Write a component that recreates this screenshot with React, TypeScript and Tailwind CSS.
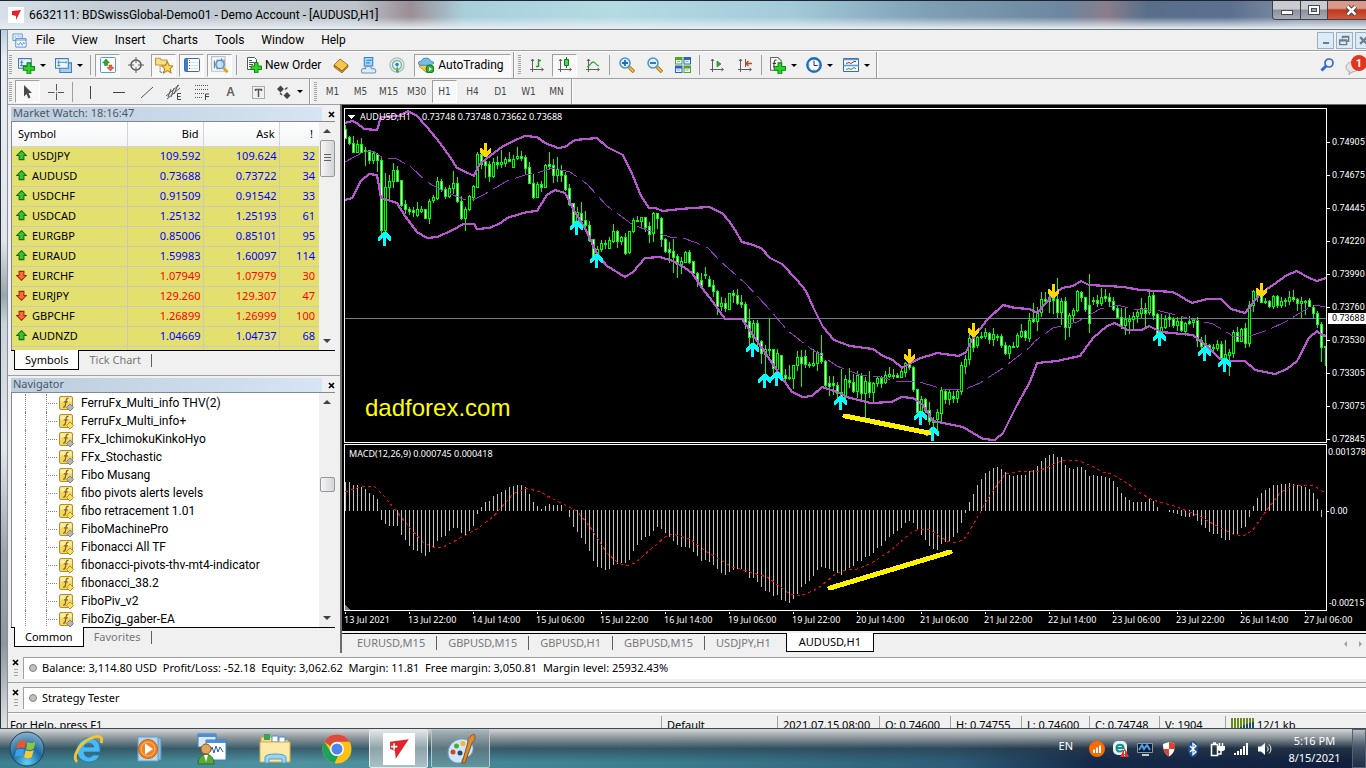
import React from 'react';
import clsx from 'clsx';

/* ---------- data ---------- */

const quotes = [
  { symbol: 'USDJPY', bid: '109.592', ask: '109.624', spread: 32, up: true },
  { symbol: 'AUDUSD', bid: '0.73688', ask: '0.73722', spread: 34, up: true },
  { symbol: 'USDCHF', bid: '0.91509', ask: '0.91542', spread: 33, up: true },
  { symbol: 'USDCAD', bid: '1.25132', ask: '1.25193', spread: 61, up: true },
  { symbol: 'EURGBP', bid: '0.85006', ask: '0.85101', spread: 95, up: true },
  { symbol: 'EURAUD', bid: '1.59983', ask: '1.60097', spread: 114, up: true },
  { symbol: 'EURCHF', bid: '1.07949', ask: '1.07979', spread: 30, up: false },
  { symbol: 'EURJPY', bid: '129.260', ask: '129.307', spread: 47, up: false },
  { symbol: 'GBPCHF', bid: '1.26899', ask: '1.26999', spread: 100, up: false },
  { symbol: 'AUDNZD', bid: '1.04669', ask: '1.04737', spread: 68, up: true },
];

const indicators = [
  { name: 'FerruFx_Multi_info THV(2)', gray: true },
  { name: 'FerruFx_Multi_info+', gray: false },
  { name: 'FFx_IchimokuKinkoHyo', gray: true },
  { name: 'FFx_Stochastic', gray: true },
  { name: 'Fibo Musang', gray: true },
  { name: 'fibo pivots alerts levels', gray: false },
  { name: 'fibo retracement 1.01', gray: false },
  { name: 'FiboMachinePro', gray: true },
  { name: 'Fibonacci All TF', gray: false },
  { name: 'fibonacci-pivots-thv-mt4-indicator', gray: false },
  { name: 'fibonacci_38.2', gray: false },
  { name: 'FiboPiv_v2', gray: false },
  { name: 'FiboZig_gaber-EA', gray: true },
];

const menus = ['File', 'View', 'Insert', 'Charts', 'Tools', 'Window', 'Help'];
const timeframes = ['M1', 'M5', 'M15', 'M30', 'H1', 'H4', 'D1', 'W1', 'MN'];
const chartTabs = ['EURUSD,M15', 'GBPUSD,M15', 'GBPUSD,H1', 'GBPUSD,M15', 'USDJPY,H1', 'AUDUSD,H1'];
const prices = ['0.74905', '0.74675', '0.74445', '0.74220', '0.73990', '0.73760', '0.73530', '0.73305', '0.73075', '0.72845'];
const dates = [
  '13 Jul 2021', '13 Jul 22:00', '14 Jul 14:00', '15 Jul 06:00', '15 Jul 22:00', '16 Jul 14:00', '19 Jul 06:00', '19 Jul 22:00',
  '20 Jul 14:00', '21 Jul 06:00', '21 Jul 22:00', '22 Jul 14:00', '23 Jul 06:00', '23 Jul 22:00', '26 Jul 14:00', '27 Jul 06:00',
];

// high, low, body top, body bottom, 1 = bull / 0 = bear
const candles: number[][] = [
  [20,33,24,33,0],[31,39,32,38,0],[31,47,38,47,0],[35,47,39,47,1],[33,47,39,47,0],[42,60,45,46,0],[45,58,45,55,0],[46,58,48,55,1],
  [48,66,49,55,0],[53,128,55,125,0],[68,130,82,125,1],[70,96,76,82,1],[58,82,65,76,1],[61,76,65,76,0],[75,101,75,100,0],[95,108,99,104,0],
  [102,109,104,106,0],[102,111,105,107,0],[97,111,104,110,1],[101,107,104,106,1],[104,113,104,113,0],[94,118,96,113,1],[90,97,92,95,1],[72,94,76,93,1],
  [74,86,76,84,0],[82,93,84,91,0],[80,92,83,91,1],[66,88,78,83,1],[72,97,78,96,0],[91,114,96,113,0],[102,125,104,113,1],[90,105,91,104,1],
  [80,95,81,92,1],[47,82,49,82,1],[47,63,49,59,0],[54,72,56,60,0],[56,76,59,71,0],[53,72,57,71,1],[51,63,57,59,0],[45,62,57,59,1],
  [52,61,54,58,1],[47,56,54,56,0],[50,62,54,62,1],[42,54,51,53,1],[46,55,51,53,0],[50,69,52,63,0],[57,78,62,78,0],[69,93,78,92,0],
  [77,92,79,92,1],[76,86,79,82,0],[59,82,60,82,1],[47,63,59,61,0],[54,77,60,70,0],[52,76,64,70,1],[60,76,65,70,0],[67,85,70,84,0],
  [79,100,83,99,0],[98,119,98,118,0],[102,120,107,118,1],[97,116,108,115,0],[106,121,115,120,0],[116,136,120,135,0],[134,151,134,151,0],[141,151,144,151,1],
  [135,146,138,144,1],[135,143,138,139,0],[132,143,135,143,1],[119,137,126,136,1],[125,142,126,136,0],[131,139,132,136,1],[128,149,132,148,0],[126,148,126,147,1],
  [113,127,115,126,1],[111,116,115,116,0],[112,122,112,116,1],[112,126,112,122,0],[117,137,121,129,0],[107,136,108,128,1],[108,123,108,113,0],[112,141,113,134,0],
  [133,147,134,146,0],[137,157,144,147,0],[134,167,146,152,0],[149,172,151,159,0],[152,168,156,159,1],[146,157,147,157,1],[145,158,147,157,0],[156,169,156,168,0],
  [167,181,168,175,0],[168,181,175,181,0],[162,173,169,170,1],[171,181,174,181,0],[175,191,180,186,0],[185,209,186,201,0],[192,205,198,201,1],[193,206,198,203,0],
  [188,204,188,204,1],[185,197,188,190,0],[184,199,190,198,0],[190,202,197,199,0],[197,223,199,217,0],[204,240,216,232,0],[215,247,218,232,1],[215,240,218,236,0],
  [235,258,236,248,0],[240,270,244,249,1],[213,250,244,245,0],[244,268,244,263,0],[244,267,248,264,1],[250,272,250,270,0],[264,275,270,273,0],[260,274,272,273,1],
  [260,283,260,273,1],[246,265,252,260,1],[245,281,252,258,0],[245,262,251,259,0],[257,262,259,260,0],[244,261,258,260,1],[246,265,247,258,1],[230,258,248,256,0],
  [255,283,256,280,0],[271,290,278,281,0],[271,289,278,280,0],[277,292,280,288,0],[264,295,287,292,0],[270,293,274,292,1],[263,282,275,277,0],[269,287,277,286,0],
  [266,292,270,286,1],[268,295,270,288,0],[272,312,276,288,1],[266,292,277,287,0],[277,297,278,287,1],[271,281,273,278,1],[271,282,273,278,0],[266,278,270,277,1],
  [262,272,269,271,1],[264,273,270,271,0],[268,272,270,272,0],[263,272,266,272,1],[257,271,258,267,1],[257,264,258,262,0],[261,286,262,284,0],[284,308,284,307,0],
  [291,312,294,307,1],[293,307,294,305,0],[297,319,305,316,0],[312,322,315,317,0],[304,327,307,314,1],[282,318,285,308,1],[284,298,286,294,0],[284,299,287,294,1],
  [286,297,291,293,0],[285,297,286,293,1],[257,289,260,286,1],[250,268,254,261,1],[228,259,233,254,1],[231,246,233,242,0],[231,242,232,240,1],[227,233,231,232,1],
  [223,233,227,231,1],[227,238,228,234,0],[223,240,229,234,1],[229,235,231,232,0],[229,242,231,240,0],[237,249,240,248,0],[240,253,241,248,1],[237,242,241,242,0],
  [228,242,230,241,1],[219,232,226,231,1],[225,235,226,232,0],[208,236,215,233,1],[198,217,214,216,0],[202,225,206,216,1],[187,211,194,207,1],[187,199,194,196,0],
  [190,207,192,196,1],[192,208,193,195,0],[173,212,194,207,0],[193,219,196,207,1],[192,234,196,222,0],[208,231,210,222,1],[203,217,205,210,1],[185,206,186,205,1],
  [186,196,187,192,0],[192,206,192,204,0],[169,227,200,218,0],[192,199,195,196,0],[190,201,195,198,0],[183,200,192,198,1],[184,196,191,193,0],[188,201,192,196,0],
  [192,205,196,204,0],[201,212,203,212,0],[203,223,212,220,0],[203,229,214,220,1],[210,228,214,216,1],[207,223,211,214,1],[205,217,207,211,1],[193,212,203,208,1],
  [198,221,203,208,0],[186,209,191,207,1],[187,214,190,210,0],[208,231,209,228,0],[209,227,222,228,1],[210,223,214,222,1],[209,221,212,214,0],[212,222,214,220,0],
  [212,225,216,220,1],[212,226,216,225,0],[217,230,218,226,1],[211,219,216,218,0],[213,222,215,217,1],[212,241,215,235,0],[232,246,235,241,0],[230,247,238,242,0],
  [239,247,240,244,0],[239,245,242,243,0],[235,245,239,243,1],[236,256,239,254,0],[235,262,249,254,1],[244,270,247,250,1],[225,252,227,248,1],[222,236,227,236,0],
  [223,236,224,236,1],[218,242,223,238,0],[196,241,200,238,1],[185,206,186,200,1],[184,196,186,192,0],[190,197,190,197,0],[193,198,196,197,0],[195,202,196,201,0],
  [190,203,191,201,1],[190,202,191,200,0],[192,202,196,200,1],[193,201,195,196,0],[186,199,192,196,1],[185,196,192,194,0],[193,205,194,198,0],[192,212,196,198,1],
  [195,209,196,197,0],[193,201,195,201,0],[200,213,202,208,0],[206,222,208,219,0],[217,256,219,242,0],[241,260,241,242,0],
];

const upperBand =
  '2,18 9,16 14,18 21,24 34,25 38,12 56,11 65,6 74,11 84,22 97,38 107,52 114,63 125,68 131,71 136,60 144,53 159,42 170,36 182,31 194,32 202,38 215,43 222,42 232,35 254,33 264,42 280,50 290,71 298,91 306,103 312,103 320,106 337,104 350,103 366,102 379,108 386,116 392,125 399,137 407,139 418,143 427,153 439,159 454,175 463,186 470,202 480,222 491,235 507,241 530,244 540,251 550,255 559,263 575,254 594,248 616,251 623,247 630,233 644,215 660,200 672,203 687,204 694,208 710,190 719,183 730,181 738,176 746,180 781,182 797,185 830,187 849,198 864,194 878,194 888,204 902,208 917,189 930,180 944,170 954,166 966,173 974,176 983,173';
const middleBand =
  '2,57 22,46 30,46 40,53 54,54 68,62 84,77 100,86 120,94 132,94 140,90 164,76 182,70 194,68 210,63 227,67 244,79 264,101 282,114 290,120 310,127 327,132 337,132 354,138 365,143 377,156 402,178 427,205 445,226 467,243 494,261 517,270 537,272 557,277 567,276 580,278 600,284 620,285 637,278 660,263 687,242 692,236 710,223 734,217 757,204 774,200 790,204 817,206 844,213 870,219 890,231 907,231 925,225 944,216 960,206 972,200 982,202';
const lowerBand =
  '2,95 9,93 18,76 26,69 34,70 38,93 54,98 62,111 74,127 84,133 94,132 110,125 120,119 131,119 134,124 146,123 158,118 164,113 184,107 194,106 204,90 212,85 222,88 232,107 244,127 254,149 264,161 282,172 290,167 302,153 317,152 330,156 342,163 349,168 359,183 370,197 382,214 399,214 410,230 427,255 439,273 449,287 460,292 469,291 479,282 494,287 504,292 527,298 549,297 558,292 570,293 580,300 590,316 620,322 640,334 652,335 660,328 674,300 687,277 694,258 714,256 737,251 750,233 764,221 772,218 784,225 799,225 806,221 818,227 850,230 864,241 877,254 884,256 902,256 912,265 932,269 944,264 954,256 966,233 974,226 979,230 983,231';

const buyArrows = [[42,127],[234,116],[254,149],[410,238],[422,269],[434,267],[498,291],[578,306],[590,322],[817,227],[862,242],[882,253]];
const sellArrows = [[142,38],[566,244],[630,218],[710,179],[918,178]];

const macd = [
  28,28,25,25,23,21,17,15,11,-9,-13,-15,-15,-15,-24,-29,-35,-39,-40,-42,-45,-41,-36,-30,-26,-25,-20,-17,-17,-22,-24,-20,-15,-3,3,8,9,14,16,18,
  20,23,24,25,25,23,16,8,4,1,4,6,5,5,5,0,-6,-16,-21,-27,-33,-40,-50,-56,-57,-59,-58,-54,-53,-52,-52,-49,-40,-34,-29,-26,-25,-20,-16,-18,
  -22,-26,-30,-34,-36,-36,-37,-41,-45,-50,-49,-51,-54,-58,-62,-64,-61,-59,-58,-58,-61,-67,-67,-71,-76,-80,-81,-85,-84,-89,-90,-92,-88,-83,-76,-73,
  -70,-65,-59,-56,-57,-58,-60,-62,-64,-60,-57,-55,-50,-50,-46,-45,-42,-37,-35,-30,-26,-23,-20,-17,-12,-10,-12,-19,-24,-29,-35,-38,-39,-33,-31,-30,
  -26,-22,-12,-2,8,16,25,31,37,39,42,43,41,38,35,34,35,35,35,39,40,44,49,52,55,56,53,53,45,42,41,43,43,40,34,35,34,34,33,32,29,23,17,13,10,
  8,8,8,8,11,9,3,0,0,-1,-2,-3,-5,-6,-6,-5,-10,-14,-17,-21,-23,-23,-27,-29,-29,-24,-23,-17,-16,-6,4,12,17,20,22,25,25,26,26,27,26,25,24,23,21,17,11,-6,
];
const signalLine =
  '2,387 14,383 22,381 32,382 40,390 50,402 67,423 80,437 90,442 99,443 117,433 134,424 150,412 170,389 184,383 197,387 214,396 234,406 247,422 264,448 275,458 284,461 292,458 307,445 322,432 330,429 347,434 364,447 389,462 397,464 410,468 424,472 447,489 457,491 474,484 494,468 507,464 514,464 527,459 547,446 569,427 577,424 587,425 604,436 614,438 623,432 634,413 647,390 662,369 677,366 694,367 707,361 720,355 734,355 747,360 760,367 769,369 784,378 797,388 810,395 834,402 854,410 874,421 890,429 900,431 910,425 920,410 937,388 950,380 970,380 982,388';

/* ---------- small building blocks ---------- */

function Icon({ size = 16, children }: { size?: number; children: React.ReactNode }) {
  return (
    <svg width={size} height={size} viewBox="0 0 16 16" fill="none" className="shrink-0" aria-hidden="true">
      {children}
    </svg>
  );
}

function Caret() {
  return <span className="ml-[5px] h-0 w-0 border-x-[3px] border-t-[3px] border-x-transparent border-t-black" />;
}

function Grip() {
  return <span className="h-5 w-[3px] bg-[repeating-linear-gradient(#a5a5a5_0_1px,#f0f0f0_1px_2px)]" />;
}

function Sep() {
  return <span className="mx-px h-5 w-px bg-[#a0a0a0]" />;
}

function Edge() {
  return <span className="-ml-px h-full w-[2px] border-r border-white bg-[#9a9a9a]" />;
}

interface ToolProps {
  label: string;
  pressed?: boolean;
  menu?: boolean;
  children: React.ReactNode;
}

function Tool({ label, pressed, menu, children }: ToolProps) {
  return (
    <button
      aria-label={label}
      className={clsx(
        'flex h-[23px] shrink-0 items-center border',
        menu ? 'w-[34px] pl-[2px]' : 'w-[25px] justify-center',
        pressed ? 'border-b-white border-l-[#a0a0a0] border-r-white border-t-[#a0a0a0] bg-[#f8f8f8]' : 'border-transparent',
      )}
    >
      {children}
      {menu && <Caret />}
    </button>
  );
}

function Plus() {
  return <path d="M8.500 5.500h3.500V9h3.500v3.500H12V16H8.500v-3.500H5V9h3.500z" fill="#2fd12f" stroke="#0a8a0a" />;
}

function Axes() {
  return <path d="M3.500 15V2M2 4l1.500-2L5 4M1 12.500h13M12.500 11l2 1.500-2 1.500" stroke="#606060" />;
}

function Magnifier({ minus }: { minus?: boolean }) {
  return (
    <Icon>
      <path d="M10 10l5 5" stroke="#a87a10" strokeWidth="3.500" />
      <path d="M10.500 10.500l4 4" stroke="#f4cf50" strokeWidth="1.500" />
      <circle cx="6" cy="6" r="5" fill="#dff1fd" stroke="#4a8fd0" strokeWidth="1.500" />
      <path d={minus ? 'M3 6h6' : 'M3 6h6M6 3v6'} stroke="#1c6cb8" strokeWidth="1.800" />
    </Icon>
  );
}

function BrandFlag() {
  return (
    <>
      <path d="M2.500 3.500 14 2 6 14 5.500 9 2.500 8z" fill="#e3242b" />
      <path d="M5 4.500v4M3 6.500h4" stroke="#fff" />
    </>
  );
}

/* ---------- window chrome ---------- */

function TitleBar() {
  return (
    <header className="relative flex h-[30px] shrink-0 items-center border-b border-[#6b7a7d] border-t border-t-[#1c2430] bg-[linear-gradient(to_right,#d5e0e8_0%,#c3ccd3_8%,#bcc5cc_26%,#9b8e97_30%,#a9cfdb_34%,#b4dbe4_45%,#a3cad8_58%,#7e9fb6_68%,#6c86a0_78%,#8a7e8b_81%,#586f8c_84%,#5a708f_90%,#8590a6_95%,#7d8798_100%)]">
      <div className="absolute inset-x-0 bottom-0 h-3 bg-linear-to-t from-[#e8eef2] to-transparent" />
      <div className="relative ml-2 h-4 w-4 bg-white">
        <Icon>
          <path d="M4 4l9-1-5 10 0-4-4-1z" fill="#e3242b" />
        </Icon>
      </div>
      <h1 className="relative ml-[5px] flex-1 font-['Roboto','Noto_Sans',sans-serif] text-xs leading-none text-black">
        6632111: BDSwissGlobal-Demo01 - Demo Account - [AUDUSD,H1]
      </h1>
      <div className="relative flex h-[19px] self-start overflow-hidden rounded-bl border-b border-l border-[#3c424c]">
        <button aria-label="Minimize" className="flex w-7 items-center justify-center border-r border-[#3c424c] bg-[linear-gradient(#c9cbd0_45%,#8b8f9b_50%,#a9adb8)]">
          <span className="mt-1 h-[5px] w-3 border border-[#454a58] bg-white" />
        </button>
        <button aria-label="Maximize" className="flex w-[27px] items-center justify-center border-r border-[#3c424c] bg-[linear-gradient(#c9cbd0_45%,#8b8f9b_50%,#a9adb8)]">
          <span className="flex h-[10px] w-3 items-center justify-center border border-[#454a58] bg-white">
            <span className="h-1 w-[6px] border border-[#454a58] bg-[#9aa]" />
          </span>
        </button>
        <button aria-label="Close" className="flex w-[38px] items-center justify-center bg-[linear-gradient(#d99a8c_40%,#bb3a22_50%,#d4583c)] pl-2">
          <svg width="13" height="11" viewBox="0 0 13 11" className="shrink-0">
            <path d="M2.500 1.500l8 8M10.500 1.500l-8 8" stroke="#4a3038" strokeWidth="4.500" />
            <path d="M2.500 1.500l8 8M10.500 1.500l-8 8" stroke="#fff" strokeWidth="2.500" />
          </svg>
        </button>
      </div>
    </header>
  );
}

function MenuBar() {
  return (
    <nav className="flex h-[21px] shrink-0 items-center border-b border-[#a0a0a0] pl-1">
      <Icon size={15}>
        <path d="M1 1h10v7H1z" fill="#e4f0fb" stroke="#5b9bd8" />
        <path d="M4 6h11v9H4z" fill="#fff" stroke="#4a8bd0" />
        <path d="M4 7.500h11" stroke="#4a8bd0" />
        <path d="M5.500 11l1.500 2 2-3 2 3 1.500-3 1 1.500" stroke="#4a8bd0" />
        <path d="M3 4h1M6 3h1M8 4h1" stroke="#4a8bd0" />
      </Icon>
      <ul className="ml-[9px] flex flex-1 gap-[17px] font-['Roboto','Noto_Sans',sans-serif] text-xs">
        {menus.map((m) => (
          <li key={m}>
            <button className="block">{m}</button>
          </li>
        ))}
      </ul>
      <div className="-mr-[6px] flex gap-[2px]">
        <button aria-label="Minimize chart" className="flex h-[17px] w-[17px] items-end justify-center border border-[#9ab0c4] bg-[#dcebf8] pb-[4px]">
          <span className="h-[2px] w-[6px] bg-[#6b7b8c]" />
        </button>
        <button aria-label="Restore chart" className="flex h-[17px] w-[17px] items-center justify-center border border-[#9ab0c4] bg-[#dcebf8]">
          <Icon size={11}>
            <path d="M5 5V2h9v7h-3M1 7h10v7H1zM1 8.500h10M5 3h9" stroke="#6b7b8c" strokeWidth="2" />
          </Icon>
        </button>
        <button aria-label="Close chart" className="flex h-[17px] w-[17px] items-center justify-center border border-[#9ab0c4] bg-[#dcebf8]">
          <Icon size={9}>
            <path d="M2 2l12 12M14 2L2 14" stroke="#6b7b8c" strokeWidth="4" />
          </Icon>
        </button>
      </div>
    </nav>
  );
}

function StandardToolbar() {
  return (
    <div className="flex h-[27px] shrink-0 items-center gap-[3px] border-t border-white pl-px font-['Roboto','Noto_Sans',sans-serif] text-xs">
      <Grip />
      <Tool label="New chart" menu>
        <Icon size={17}>
          <path d="M.5 1.500h12v9H.5z" fill="#eef6fd" stroke="#3f7fbf" />
          <path d="M3.500 3v6M2 5h3M2 8h8" stroke="#3f7fbf" />
          <Plus />
        </Icon>
      </Tool>
      <Tool label="Profiles" menu>
        <Icon size={17}>
          <path d="M4.500 5.500h11v9h-11z" fill="#a9cdec" stroke="#3f7fbf" />
          <path d="M.5 1.500h12v9H.5z" fill="#eef6fd" stroke="#3f7fbf" />
          <path d="M3.500 3v6M2 5h9M2 8h3M10.500 4v2" stroke="#4f8fc9" />
        </Icon>
      </Tool>
      <Sep />
      <Tool label="Market Watch" pressed>
        <Icon>
          <rect x=".5" y=".5" width="15" height="15" rx="1" fill="#fff" stroke="#5a9bd5" />
          <path d="M6 2l3.500 4H7.500v2.500h-3V6h-2z" fill="#2fa82f" stroke="#147014" strokeWidth=".5" />
          <path d="M10.500 14L7 10.500h2V8h3v2.500h2z" fill="#f0633c" stroke="#b8300c" strokeWidth=".5" />
        </Icon>
      </Tool>
      <Tool label="Data Window">
        <Icon>
          <circle cx="8" cy="8" r="5" stroke="#5c5c5c" strokeWidth="1.500" />
          <path d="M8 0v6M8 10v6M0 8h6M10 8h6" stroke="#5c5c5c" />
        </Icon>
      </Tool>
      <Tool label="Navigator" pressed>
        <Icon size={18}>
          <path d="M.5 2h4l1 1.500h5V8h-10z" fill="#f8e08a" stroke="#c09a30" />
          <path d="M4.500 9v6M5 14.500h3" stroke="#555" strokeDasharray="1 1" />
          <path d="M11 5l1.500 3.500 3.500.3-2.600 2.500.8 3.700-3.200-2-3.200 2 .8-3.700L6 8.800l3.500-.3z" fill="#ffd860" stroke="#b8861c" />
        </Icon>
      </Tool>
      <Tool label="Terminal" pressed>
        <Icon>
          <rect x=".5" y="1.500" width="15" height="13" rx="1" fill="#fff" stroke="#2f6fb5" />
          <path d="M1 2h3v12H1z" fill="#3c7ec6" />
          <path d="M5 5.500h9M5 8.500h9M5 11.500h9" stroke="#d3deea" />
          <path d="M5 3.500h1M5 5.500h1M5 8.500h1M5 11.500h1" stroke="#c33" />
        </Icon>
      </Tool>
      <Tool label="Strategy Tester" pressed>
        <Icon size={18}>
          <path d="M.5 .5h12v13H.5z" fill="#fafcfe" stroke="#b6c2cc" />
          <path d="M3 11V4M5.500 12V3M9.500 9V2M11.500 6V3" stroke="#777" />
          <circle cx="8" cy="7.500" r="3.700" fill="#bfe0f8" fillOpacity=".8" stroke="#4f93cf" strokeWidth="1.300" />
          <path d="M10.800 10.500l4 4" stroke="#d9a52c" strokeWidth="2.500" />
        </Icon>
      </Tool>
      <Sep />
      <button className="flex h-[23px] items-center gap-[3px] whitespace-nowrap pl-[5px] pr-1">
        <Icon>
          <path d="M1.500.5h7l2 2v10h-9z" fill="#fff" stroke="#555" />
          <path d="M3 3.500h3M3 5.500h5M3 7.500h4M3 9.500h3" stroke="#555" />
          <Plus />
        </Icon>
        New Order
      </button>
      <Tool label="MetaEditor">
        <Icon>
          <path d="M1 8L7 2l8 6-6 6z" fill="#f3c64c" stroke="#a8741a" />
          <path d="M1 8v2l8 6 6-6V8l-6 6z" fill="#c8902a" stroke="#8a5c10" strokeWidth=".7" />
        </Icon>
      </Tool>
      <Tool label="MQL5 community">
        <Icon size={17}>
          <path d="M4 .5h8v8H4z" fill="#a5d2f5" stroke="#2f86cf" />
          <path d="M6 3h5M6 5.500h3" stroke="#2f86cf" />
          <path d="M2 15c-2-3 1-5 3-4 0-3 5-3 6 0 3-1 5 2 3 4z" fill="#dfeaf6" stroke="#6f96bd" />
        </Icon>
      </Tool>
      <Tool label="Signals">
        <Icon>
          <circle cx="8" cy="8" r="7" stroke="#a9c9c0" strokeWidth="1.500" />
          <circle cx="8" cy="8" r="4.500" stroke="#7fb3a8" strokeWidth="1.500" />
          <circle cx="8" cy="7.500" r="1.800" fill="#2c83c9" />
          <path d="M8 8l2 7.500H7z" fill="#3aaa4a" />
        </Icon>
      </Tool>
      <button className="ml-[2px] flex h-[23px] w-[97px] items-center gap-1 whitespace-nowrap border border-b-white border-l-[#a0a0a0] border-r-white border-t-[#a0a0a0] bg-[#f8f8f8] pl-[3px]">
        <Icon>
          <path d="M1 9l6-3 7 3-5 7z" fill="#f2cb4c" stroke="#b98c1c" />
          <path d="M0 6c0-2 4-1 4-3s7-3 8 0c0 2 4 1 4 3s-16 4-16 0z" fill="#79bce8" stroke="#2f7db5" strokeWidth=".8" />
          <circle cx="12" cy="12" r="4" fill="#2fb52f" stroke="#0f7a0f" />
          <path d="M11 10v4l3-2z" fill="#fff" />
        </Icon>
        AutoTrading
      </button>
      <Edge />
      <Grip />
      <Tool label="Bar chart">
        <Icon>
          <Axes />
          <path d="M9.500 2v8M7 9.500h2M10 3.500h2" stroke="#2a9a2a" strokeWidth="1.500" />
        </Icon>
      </Tool>
      <Tool label="Candlesticks" pressed>
        <Icon>
          <Axes />
          <path d="M9.500 0v11" stroke="#147a14" />
          <path d="M7.500 2.500h4v6h-4z" fill="#4fd04f" stroke="#147a14" />
        </Icon>
      </Tool>
      <Tool label="Line chart">
        <Icon>
          <Axes />
          <path d="M2 10c3-1 4-5 6-5s3 3 6 4" stroke="#3fa03f" strokeWidth="1.300" />
        </Icon>
      </Tool>
      <Sep />
      <Tool label="Zoom In">
        <Magnifier />
      </Tool>
      <Tool label="Zoom Out">
        <Magnifier minus />
      </Tool>
      <Tool label="Tile Windows">
        <Icon>
          <path d="M0 0h7.500v7.500H0zM8.500 8.500H16V16H8.500z" fill="#55a51c" />
          <path d="M8.500 0H16v7.500H8.500zM0 8.500h7.500V16H0z" fill="#2b63c4" />
          <path d="M1 3h5.500v3.500H1zM9.500 3H15v3.500H9.500zM1 11.500h5.500V15H1zM9.500 11.500H15V15H9.500z" fill="#eaf3fb" />
          <path d="M2 4.500h3M10.500 4.500h3M2 13h3M10.500 13h3" stroke="#7fb0da" />
        </Icon>
      </Tool>
      <Sep />
      <Tool label="Auto Scroll">
        <Icon>
          <Axes />
          <path d="M8 4v6l4-3z" fill="#2fae2f" stroke="#147a14" strokeWidth=".6" />
        </Icon>
      </Tool>
      <Tool label="Chart Shift">
        <Icon>
          <Axes />
          <path d="M8.500 2v8" stroke="#606060" />
          <path d="M9 6.500h6M11.500 4L9 6.500 11.500 9" stroke="#d0421c" strokeWidth="1.500" />
        </Icon>
      </Tool>
      <Sep />
      <Tool label="Indicators" menu>
        <Icon size={17}>
          <path d="M1.500.5h7l3 3v9h-10z" fill="#fff" stroke="#666" />
          <path d="M7 3c-2-.5-2 1-2.200 3L4.500 10M3.500 6h3" stroke="#333" />
          <Plus />
        </Icon>
      </Tool>
      <Tool label="Periods" menu>
        <Icon>
          <circle cx="8" cy="8" r="6.700" fill="#f4f9fd" stroke="#1d6cc4" strokeWidth="2.400" />
          <path d="M8 4v4.500h3.500" stroke="#333" />
          <path d="M8 3h.01M8 13h.01M3 8h.01M13 8h.01" stroke="#555" strokeLinecap="round" />
        </Icon>
      </Tool>
      <Tool label="Templates" menu>
        <Icon>
          <path d="M.5 1.500h15v13H.5z" fill="#f6fafd" stroke="#2f6fb5" />
          <path d="M.5 2.500h15M.5 8.500h15" stroke="#5b97d0" strokeWidth="1.500" />
          <path d="M3 6.500l3-1 2 1 3-2h2" stroke="#a03020" />
          <path d="M3 12.500l3-1 2 1 3-2 2 1.500" stroke="#2f9a2f" />
        </Icon>
      </Tool>
      <Edge />
      <div className="ml-auto flex items-center gap-[9px]">
        <button aria-label="Search">
          <Icon>
            <circle cx="9" cy="6" r="4" stroke="#2f6cd0" strokeWidth="1.700" />
            <path d="M6 9l-4.500 4.500" stroke="#2f6cd0" strokeWidth="3" />
          </Icon>
        </button>
        <button aria-label="Notifications, 1 new" className="relative -mr-px h-5 w-[22px]">
          <svg width="14" height="14" viewBox="0 0 14 14" className="absolute bottom-0 left-0">
            <path d="M7 1c4 0 6 2 6 5s-3 5-6 5l-3 2.500.5-3C2 10 1 8 1 6s2-5 6-5z" fill="#e4e4e4" stroke="#a8a8a8" />
          </svg>
          <span className="absolute right-0 top-0 flex h-4 w-4 items-center justify-center rounded-full bg-[#e0351e] text-[11px] font-bold leading-none text-white">1</span>
        </button>
      </div>
    </div>
  );
}

function LineToolbar() {
  return (
    <div className="flex h-[26px] shrink-0 items-center gap-[3px] border-t border-[#a0a0a0] pl-px">
      <Grip />
      <Tool label="Cursor" pressed>
        <Icon>
          <path d="M4 1l8 8H8.500l2 4.500-2 1L6.500 10 4 12.500z" fill="#4a4a4a" />
        </Icon>
      </Tool>
      <Tool label="Crosshair">
        <Icon>
          <path d="M8.500 0v6.500M8.500 9.500V16M0 8.500h6.500M10 8.500h6M8 8.500h1" stroke="#555" />
        </Icon>
      </Tool>
      <Sep />
      <Tool label="Vertical Line">
        <Icon>
          <path d="M8.500 2v13" stroke="#444" />
        </Icon>
      </Tool>
      <Tool label="Horizontal Line">
        <Icon>
          <path d="M3 8.500h12" stroke="#444" />
        </Icon>
      </Tool>
      <Tool label="Trendline">
        <Icon>
          <path d="M3 14L15 3" stroke="#555" />
        </Icon>
      </Tool>
      <Tool label="Equidistant Channel">
        <Icon>
          <path d="M0 12L13 1M1 15L14 4M2 13l3-8M5 13l3-9M8 10l4-9" stroke="#555" />
          <path d="M15 9.500h-3.500v6H15M12 12.500h2.500" stroke="#444" />
        </Icon>
      </Tool>
      <Tool label="Fibonacci Retracement">
        <Icon>
          <path d="M1 1.500h13M1 5.500h13M1 9.500h9M1 13.500h8" stroke="#555" strokeDasharray="1 1" />
          <path d="M11.500 16v-6H15M12 12.500h3" stroke="#444" />
        </Icon>
      </Tool>
      <Tool label="Text">
        <span className="pl-[2px] text-xs font-semibold text-[#606060]">A</span>
      </Tool>
      <Tool label="Text Label">
        <Icon>
          <path d="M2.500 2.500h12v12h-12z" stroke="#666" strokeDasharray="1 1" />
          <path d="M5 5.500h7M8.500 5v8M5.500 5v2M11.500 5v2" stroke="#555" strokeWidth="1.500" />
        </Icon>
      </Tool>
      <Tool label="Arrows" menu>
        <Icon>
          <path d="M4.500 1.500L1 5l3.500 3.500L8 5zM11 8l3.500 3.500L11 15l-3.500-3.500z" fill="#444" />
          <path d="M4 9l2 2M9 5.500l2.500-2" stroke="#444" strokeWidth="1.500" />
        </Icon>
      </Tool>
      <Edge />
      <Grip />
      {timeframes.map((tf) => (
        <button
          key={tf}
          className={clsx(
            "h-[23px] w-[25px] border font-['DejaVu_Sans_Condensed','Noto_Sans',sans-serif] text-[10px] leading-none text-[#484848]",
            tf === 'H1' ? 'border-b-white border-l-[#a0a0a0] border-r-white border-t-[#a0a0a0] bg-[#f8f8f8]' : 'border-transparent',
          )}
        >
          {tf}
        </button>
      ))}
      <Edge />
    </div>
  );
}

/* ---------- left dock ---------- */

function PanelHeader({ title }: { title: string }) {
  return (
    <div className="ml-[3px] flex h-[14px] shrink-0 items-center">
      <h2 className="flex-1 self-stretch bg-linear-to-r from-[#bccddd] to-[#d6e4f3] pl-[2px] leading-3 text-[#4a5866]">{title}</h2>
      <button aria-label={`Close ${title}`} className="flex w-[18px] justify-center">
        <CloseMark />
      </button>
    </div>
  );
}

function CloseMark() {
  return (
    <svg width="7" height="7" viewBox="0 0 7 7">
      <path d="M1 1l5 5M6 1L1 6" stroke="#000" strokeWidth="1.700" />
    </svg>
  );
}

function PanelTabs({ active, other }: { active: string; other: string }) {
  return (
    <div className="ml-[3px] mr-[5px] flex h-[21px] shrink-0 items-start border-t border-black">
      <button className="-mt-px ml-[3px] h-5 border border-t-0 border-black bg-white px-[10px] leading-[18px]">{active}</button>
      <button className="flex items-center gap-[10px] pl-[10px] leading-[18px] text-[#787878]">
        {other}
        <span className="h-[13px] w-px bg-[#606060]" />
      </button>
    </div>
  );
}

function Scrollbar({ thumb, ribbed }: { thumb: string; ribbed?: boolean }) {
  return (
    <div className="flex w-4 shrink-0 flex-col items-center bg-[#f0f0f0] py-[7px]">
      <span className="border-x-[4px] border-b-[4px] border-x-transparent border-b-[#404040]" />
      <span className={clsx('flex w-[15px] items-center justify-center rounded-xs border border-[#979797] bg-linear-to-r from-[#f6f6f6] to-[#d2d4d8]', thumb)}>
        {ribbed && <span className="h-[9px] w-[7px] bg-[repeating-linear-gradient(#606060_0_1px,transparent_1px_3px)]" />}
      </span>
      <span className="mt-auto border-x-[4px] border-t-[4px] border-x-transparent border-t-[#404040]" />
    </div>
  );
}

function MarketWatch() {
  return (
    <section className="pt-[2px]">
      <PanelHeader title="Market Watch: 18:16:47" />
      <div className="ml-[3px] mr-[5px] flex h-[229px] overflow-hidden border-l border-t border-[#828790] bg-white">
        <div className="flex-1 overflow-hidden">
          <table className="w-full table-fixed border-collapse leading-[19px]">
            <thead>
              <tr className="h-6 bg-linear-to-b from-white to-[#f3f4f6]">
                <th className="w-[115px] border-b border-r border-[#d5d5d5] pl-[6px] text-left font-normal">Symbol</th>
                <th className="w-[76px] border-b border-r border-[#d5d5d5] pr-1 text-right font-normal">Bid</th>
                <th className="w-[76px] border-b border-r border-[#d5d5d5] pr-1 text-right font-normal">Ask</th>
                <th className="border-b border-[#d5d5d5] pr-[6px] text-right font-normal">!</th>
              </tr>
            </thead>
            <tbody className="bg-[#e4e070]">
              {quotes.map((q) => (
                <tr key={q.symbol} className={clsx('h-5', q.up ? 'text-[#0000ff]' : 'text-[#ff0000]')}>
                  <td className="border-b border-r border-[#c9c9c0] p-0 pb-px leading-[18px] text-black">
                    <span className="flex items-center gap-[5px] pl-1">
                      <Icon size={11}>
                        {q.up ? (
                          <path d="M8 1l7 7h-3.500v6h-7V8H1z" fill="#35c435" stroke="#0e6b0e" strokeWidth="1.500" />
                        ) : (
                          <path d="M8 15L1 8h3.500V2h7v6H15z" fill="#ff6a3c" stroke="#9c2408" strokeWidth="1.500" />
                        )}
                      </Icon>
                      {q.symbol}
                    </span>
                  </td>
                  <td className="border-b border-r border-[#c9c9c0] p-0 pb-px pr-[2px] text-right leading-[18px]">{q.bid}</td>
                  <td className="border-b border-r border-[#c9c9c0] p-0 pb-px pr-[2px] text-right leading-[18px]">{q.ask}</td>
                  <td className="border-b border-[#c9c9c0] p-0 pb-px pr-1 text-right leading-[18px]">{q.spread}</td>
                </tr>
              ))}
              <tr className="h-5">
                <td className="border-r border-[#c9c9c0]" />
                <td className="border-r border-[#c9c9c0]" />
                <td className="border-r border-[#c9c9c0]" />
                <td />
              </tr>
            </tbody>
          </table>
        </div>
        <Scrollbar thumb="mt-[7px] h-[37px]" ribbed />
      </div>
      <PanelTabs active="Symbols" other="Tick Chart" />
    </section>
  );
}

function IndicatorIcon({ gray }: { gray: boolean }) {
  return (
    <svg width="15" height="15" viewBox="0 0 15 15" className="shrink-0" aria-hidden="true">
      <rect x=".5" y=".5" width="13" height="13" rx="1.500" fill="#f3d765" stroke="#b8901c" />
      <path d="M1.500 1.500h11v4h-11z" fill="#fbeeb0" />
      <path d="M9.500 2.500C7.500 2 7.200 3.500 7 5.500L6.300 9.500c-.3 1.500-1 2-2.300 1.500M4.800 5.800h4" fill="none" stroke="#8a6410" strokeWidth="1.300" />
      <path d="M11 8l3.500 3.500L11 15l-3.500-3.500z" fill={gray ? '#b4b8bd' : '#fbe060'} stroke={gray ? '#6e7278' : '#a87c10'} strokeWidth=".8" />
    </svg>
  );
}

function Navigator() {
  return (
    <section className="mt-1 flex min-h-0 flex-1 flex-col border-t border-[#a0a0a0] pt-[2px]">
      <PanelHeader title="Navigator" />
      <div className="ml-[3px] mr-[5px] flex min-h-0 flex-1 border-l border-t border-[#828790] bg-white">
        <ul className="flex-1 overflow-hidden pt-px">
          {indicators.map((ind) => (
            <li key={ind.name} className="flex h-[18px] items-center pl-[13px]">
              <span className="h-full w-[21px] border-l border-dotted border-[#808080]" />
              <span className="h-full w-[2px] border-l border-dotted border-[#808080]" />
              <span className="mr-[2px] w-[9px] border-t border-dotted border-[#808080]" />
              <button className="flex items-center gap-[7px] whitespace-nowrap font-['Roboto','Noto_Sans',sans-serif] text-xs leading-[18px]">
                <IndicatorIcon gray={ind.gray} />
                {ind.name}
              </button>
            </li>
          ))}
        </ul>
        <Scrollbar thumb="mt-[73px] h-[15px]" />
      </div>
      <PanelTabs active="Common" other="Favorites" />
    </section>
  );
}

/* ---------- chart ---------- */

function ChartPlot() {
  return (
    <svg className="h-[507px] w-full" shapeRendering="crispEdges" fill="none">
      {/* price pane */}
      <path d="M5 10h7l-3.500 4z" fill="#fff" />
      <path d="M2 213.500h981" stroke="#708090" />
      {candles.map(([hi, lo, top, bottom, bull], i) => {
        const x = 2 + i * 4;
        return (
          <g key={i}>
            <rect x={x} y={hi} width="1" height={lo - hi + 1} fill="#00ff00" />
            <rect x={x - 1} y={top} width="3" height={Math.max(1, bottom - top + 1)} fill="#00ff00" />
            {bottom - top > 1 && <rect x={x} y={top + 1} width="1" height={bottom - top - 1} fill={bull ? '#000' : '#fff'} />}
          </g>
        );
      })}
      <polyline points={middleBand} stroke="#9932cc" strokeDasharray="18 6" />
      <polyline points={upperBand} stroke="#ba55d3" strokeWidth="2.200" />
      <polyline points={lowerBand} stroke="#ba55d3" strokeWidth="2.200" />
      {buyArrows.map(([x, y]) => (
        <path key={`b${x}`} transform={`translate(${x} ${y})`} d="M-2 0h3l5 5v4h-1l-4-3v8h-3V6l-4 3h-1V5z" fill="#00ffff" />
      ))}
      {sellArrows.map(([x, y]) => (
        <path key={`s${x}`} transform={`translate(${x} ${y})`} d="M-1 0h3v8l3-3h1v4l-4 5h-3l-4-5V5h1l3 3z" fill="#ffd700" />
      ))}
      <text x="22" y="311" fontSize="24" fill="#ffff00" className="font-['Liberation_Sans',Arial,sans-serif]">dadforex.com</text>
      <path d="M502 311l84 17" stroke="#fff200" strokeWidth="5" strokeLinecap="round" />
      <g fontSize="9" fill="#fff">
        <text x="17" y="15">AUDUSD,H1</text>
        <text x="79" y="15">0.73748 0.73748 0.73662 0.73688</text>
        <text x="6" y="352">MACD(12,26,9) 0.000745 0.000418</text>
      </g>

      {/* indicator pane */}
      {macd.map((v, i) => (
        <rect key={i} x={2 + i * 4} y={v > 0 ? 405 - v : 405} width="1" height={v === 0 ? 0 : Math.abs(v) + 1} fill="#c0c0c0" />
      ))}
      <polyline points={signalLine} stroke="#ff0000" strokeDasharray="3 3" />
      <path d="M487 483l120-36" stroke="#fff200" strokeWidth="5" strokeLinecap="round" />
      <path d="M2 500v5h5z" fill="#708090" />

      <path d="M1.500 3.500h982v334H1.500zM1.500 339.500h982v166H1.500z" stroke="#fff" />
    </svg>
  );
}

function PriceScale() {
  return (
    <div className="relative w-[39px] shrink-0 overflow-hidden pt-[31px] font-['Roboto','Noto_Sans',sans-serif] text-[9px] leading-3 text-white">
      <ul className="flex flex-col gap-[21px]">
        {prices.map((p) => (
          <li key={p} className="flex items-center gap-[2px]">
            <span className="h-px w-[3px] bg-white" />
            {p}
          </li>
        ))}
      </ul>
      <div className="mt-px pl-px">0.001378</div>
      <div className="mt-[47px] flex items-center gap-px">
        <span className="h-px w-[2px] bg-white" />
        0.00
      </div>
      <div className="mt-[80px] whitespace-nowrap pl-[2px]">-0.00215</div>
      <div className="absolute inset-x-0 top-[208px] ml-px bg-white pl-1 leading-[11px] text-black">0.73688</div>
    </div>
  );
}

function ChartWindow() {
  return (
    <section className="flex min-w-0 flex-1 flex-col border-l-2 border-t border-[#6d6d6d]">
      <div className="flex-1 bg-black pl-px">
        <div className="flex">
          <div className="min-w-0 flex-1">
            <ChartPlot />
          </div>
          <PriceScale />
        </div>
        <ul className="flex h-[19px] overflow-hidden text-[9px] leading-3 text-white">
          {dates.map((d) => (
            <li key={d} className="relative w-16 shrink-0 whitespace-nowrap pl-px pt-[2px]">
              <span className="absolute left-[2px] top-[-1px] h-[3px] w-px bg-white" />
              {d}
            </li>
          ))}
        </ul>
      </div>
      <div className="flex h-[22px] shrink-0 items-start bg-[#f0f0f0] pt-[2px]">
        <div className="flex h-5 flex-1 items-start border-t border-black pl-1 text-[#787878]">
          {chartTabs.map((t, i) =>
            t === 'AUDUSD,H1' ? (
              <button key={i} className="-mt-px ml-1 h-[19px] border border-t-0 border-black bg-white px-3 leading-[18px] text-black">
                {t}
              </button>
            ) : (
              <button key={i} className={clsx('mt-[2px] px-[11px] leading-[14px]', i < 4 && 'border-r border-[#606060]')}>
                {t}
              </button>
            ),
          )}
          <div className="ml-auto mr-1 flex gap-3 self-center">
            <button aria-label="Scroll tabs left" className="border-y-[3px] border-r-[3px] border-y-transparent border-r-[#a0a0a0]" />
            <button aria-label="Scroll tabs right" className="border-y-[3px] border-l-[3px] border-y-transparent border-l-[#a0a0a0]" />
          </div>
        </div>
      </div>
    </section>
  );
}

/* ---------- bottom ---------- */

function DockRow({ children }: { children: React.ReactNode }) {
  return (
    <div className="flex h-[30px] shrink-0 border-b border-[#a0a0a0] pt-1">
      <div className="flex w-[15px] flex-col items-center gap-[3px] pt-[2px]">
        <CloseMark />
        <span className="h-[9px] w-1 bg-[repeating-linear-gradient(#a5a5a5_0_1px,#f0f0f0_1px_3px)]" />
      </div>
      <div className="mb-[3px] flex flex-1 items-center border-l border-t border-[#a0a0a0] bg-white pb-[2px] pl-[5px]">
        <span className="mr-[5px] h-2 w-2 rounded-full border border-[#808080] bg-[#c0c0c0]" />
        {children}
      </div>
    </div>
  );
}

function StatusBar() {
  return (
    <footer className="-mb-[7px] flex h-[22px] shrink-0 items-center border-t border-white leading-[18px]">
      <span className="flex-1 pl-[2px]">For Help, press F1</span>
      <StatusCell width="w-[116px]">Default</StatusCell>
      <StatusCell width="w-[102px]">2021.07.15 08:00</StatusCell>
      <StatusCell width="w-[71px]">O: 0.74600</StatusCell>
      <StatusCell width="w-[71px]">H: 0.74755</StatusCell>
      <StatusCell width="w-[68px]">L: 0.74600</StatusCell>
      <StatusCell width="w-[70px]">C: 0.74748</StatusCell>
      <StatusCell width="w-[66px]">V: 1904</StatusCell>
      <StatusCell width="w-[141px]">
        <svg width="23" height="14" viewBox="0 0 23 14" className="mr-[3px]">
          <path d="M1 0v14M4 0v14M7 0v14M10 0v14M13 0v14M16 0v14M19 0v14M22 0v14" stroke="#6a8a1c" strokeWidth="2" />
          <path d="M7 10v4M10 9v5M13 7v7M16 6v8M19 5v9M22 4v10" stroke="#17506e" strokeWidth="2" />
        </svg>
        12/1 kb
      </StatusCell>
    </footer>
  );
}

function StatusCell({ width, children }: { width: string; children: React.ReactNode }) {
  return <span className={clsx('mt-px flex h-[18px] shrink-0 items-center whitespace-nowrap border-l border-[#a0a0a0] pl-[5px]', width)}>{children}</span>;
}

function Taskbar() {
  return (
    <div className="relative z-10 flex h-10 shrink-0 items-center border-t border-[#3f4a50] bg-[linear-gradient(to_bottom,#d3d7d9_0%,#8f989d_22%,#2b3b4599_50%,transparent_85%),linear-gradient(to_right,#3c8092_0%,#4f93a2_22%,#3a7a8e_50%,#2d5c78_70%,#14294a_80%,#101f3c_100%)]">
      <button aria-label="Start" className="ml-[9px]">
        <svg width="36" height="36" viewBox="0 0 36 36">
          <defs>
            <radialGradient id="orb" cx=".5" cy=".9" r=".9">
              <stop offset="0" stopColor="#5fd0f5" />
              <stop offset=".5" stopColor="#1f6aa0" />
              <stop offset="1" stopColor="#8ab4cc" />
            </radialGradient>
          </defs>
          <circle cx="18" cy="18" r="17" fill="url(#orb)" stroke="#1c3f58" />
          <path d="M9 11c3-2 5-2 8-.5l-1.500 7c-3-1.500-5-1.500-8 .5z" fill="#f0552a" />
          <path d="M18.500 11c3 1.500 5 1.500 8-.5l-1.700 7c-3 2-5 2-7.800.5z" fill="#8cc63f" />
          <path d="M7.200 19.200c3-2 5-2 8-.5l-1.600 7c-3-1.500-5-1.500-8 .5z" fill="#3aa0e8" />
          <path d="M16.700 19.200c3 1.500 5 1.500 8-.5l-1.800 7c-3 2-5 2-7.800.5z" fill="#fcc92f" />
        </svg>
      </button>
      <button aria-label="Internet Explorer" className="ml-[27px] w-[34px]">
        <svg width="34" height="34" viewBox="0 0 34 34" fill="none">
          <path d="M28 20c1-10-5-14-11-14S5 11 5 18s5 12 12 12c5 0 9-2.500 10.500-7H21c-2.500 4-9 2.500-9-3zM12 15c1-5 9-5 10 0z" fill="#4bb8f2" stroke="#1b78bc" strokeWidth=".8" fillRule="evenodd" />
          <path d="M5 30c-5-5 2-18 12-23 8-4 15-4 12 4" stroke="#f5c62c" strokeWidth="2.800" />
        </svg>
      </button>
      <button aria-label="Media Player" className="ml-[29px] w-[30px]">
        <svg width="30" height="32" viewBox="0 0 30 32">
          <path d="M8 5h18v22H8z" fill="#8fbfe2" stroke="#5a8fb8" />
          <path d="M3 4h20v24H3z" fill="#b4d7f0" stroke="#6b9fc6" />
          <circle cx="13" cy="16" r="9.500" fill="#f58220" stroke="#c85e08" />
          <circle cx="13" cy="16" r="7" fill="none" stroke="#ffb878" />
          <path d="M10 10.500v11l8-5.500z" fill="#fff" />
        </svg>
      </button>
      <button aria-label="Trading terminal" className="ml-[31px] w-8">
        <svg width="32" height="34" viewBox="0 0 32 34">
          <path d="M2 2h18v13H2z" fill="#d9e9f8" stroke="#3d7fc4" />
          <path d="M2 2h18v3H2z" fill="#4a90d9" />
          <path d="M10 8h20v20H10z" fill="#fff" stroke="#3d7fc4" />
          <path d="M10 8h20v3H10z" fill="#4a90d9" />
          <path d="M14 20l2-5 2 6 2-7 2 6 2-5 3 5" stroke="#2a5fa8" fill="none" />
          <path d="M2 32c0-13 16-13 16 0z" fill="#58a83c" stroke="#2f7018" />
          <path d="M8 23l2 7 2-7z" fill="#fff" />
          <circle cx="10" cy="17" r="5" fill="#e2a560" stroke="#8a5a20" />
        </svg>
      </button>
      <button aria-label="Explorer" className="ml-[31px] w-[33px]">
        <svg width="33" height="34" viewBox="0 0 33 34">
          <path d="M2 5h13l2 3h12v20H2z" fill="#f6dc86" stroke="#c9a347" />
          <path d="M5 2h6v6H5z" fill="#3aa05a" />
          <path d="M13 4h6v6h-6zM20 5h6v6h-6z" fill="#fff" stroke="#4a90d0" />
          <path d="M1 10h30v20H1z" fill="#fbe9a8" stroke="#d1ad52" />
          <path d="M6 31v-6c0-4 21-4 21 0v6h-4v-4H10v4z" fill="#9bd4f2" stroke="#4d9fcf" />
        </svg>
      </button>
      <button aria-label="Chrome" className="ml-[30px] w-[30px]">
        <svg width="30" height="30" viewBox="0 0 30 30">
          <circle cx="15" cy="15" r="14.500" fill="#fbc116" />
          <path d="M2.400 7.800A14.500 14.500 0 0 1 27.600 7.800H15a7 7 0 0 0-6.500 4.500z" fill="#dd4b3e" />
          <path d="M2.400 7.800L9 18.500a7 7 0 0 0 7 3.500l-3.500 7.300A14.500 14.500 0 0 1 2.400 7.800z" fill="#1aa260" />
          <circle cx="15" cy="15" r="7" fill="#fff" />
          <circle cx="15" cy="15" r="5.500" fill="#4a86ec" />
        </svg>
      </button>
      <button aria-label="BDSwiss MetaTrader" className="ml-[17px] flex h-[39px] w-[59px] items-center justify-center rounded-xs border border-[#e4eaec] bg-linear-to-b from-[#e3e7e8] via-[#8fa3aa] to-[#a8c2c6]">
        <span className="flex h-8 w-8 items-center justify-center bg-white">
          <Icon size={26}>
            <BrandFlag />
          </Icon>
        </span>
      </button>
      <button aria-label="Paint" className="ml-[3px] flex h-[39px] w-[59px] items-center justify-center rounded-xs border border-[#b9c6ca] bg-linear-to-b from-[#a9b3b6] via-[#5b7680] to-[#5f97a2]">
        <svg width="32" height="32" viewBox="0 0 32 32">
          <path d="M3 20C3 11 11 5 19 6s11 8 8 14-7 2-9 5 0 5-5 5S3 26 3 20z" fill="#cfe6f6" stroke="#6d9fc4" />
          <circle cx="8" cy="19" r="2.500" fill="#d8402c" />
          <circle cx="11.500" cy="13" r="2.500" fill="#4fa83a" />
          <circle cx="18" cy="10.500" r="2.500" fill="#f2b52c" />
          <circle cx="15" cy="20" r="2.500" fill="#2a4a6c" />
          <path d="M29 1c2 3 1 6-2 9l-7 20h-3l6-21c-1-3 2-6 6-8z" fill="#d98a3c" stroke="#8c5218" />
        </svg>
      </button>

      <div className="ml-auto flex items-center text-white">
        <span className="mb-[6px] mr-4 text-[11px]">EN</span>
        <div className="flex items-center gap-2">
          <Icon>
            <circle cx="8" cy="8" r="8" fill="#ff6a00" />
            <path d="M5 12V8.500M8 12V6.500M11 12V4.500" stroke="#fff" strokeWidth="2" />
          </Icon>
          <Icon>
            <rect width="14" height="14" rx="5" fill="#e6f5f4" />
            <path d="M3.500 7h7c0-4.500-7-4.500-7 0s5 4 6.500 2" stroke="#12908a" strokeWidth="2" />
            <path d="M11.500 7L16 16H7z" fill="#e03a30" />
            <path d="M11.500 10v3M11.500 14v1" stroke="#fff" />
          </Icon>
          <Icon>
            <path d="M.5 2.500h15v9H.5z" fill="#0c1c34" stroke="#8898a4" />
            <path d="M2 9l3-5 2 4 3-4 3 5" stroke="#4fa0ee" strokeWidth="2" />
            <path d="M5 14h7" stroke="#c8c8c8" strokeWidth="2" />
          </Icon>
          <Icon>
            <path d="M8 1l6 2c0 7-2 10-6 12.500C4 13 2 10 2 3z" fill="#fff" />
            <path d="M8 1l6 2v5H8zM8 8v7.500C4.500 13 3 11 2.400 8z" fill="#e0402c" />
          </Icon>
          <Icon>
            <ellipse cx="8" cy="8" rx="5" ry="8" fill="#1a4f9c" />
            <path d="M5 5l6 6-3 2.500v-11L11 5l-6 6" stroke="#fff" strokeWidth="1.300" />
          </Icon>
          <Icon>
            <path d="M2.500 3.500h6v11h-6zM4 2h3" stroke="#fff" strokeWidth="1.500" />
            <path d="M10.500 2v3M13.500 2v3M12 9v4H8" stroke="#fff" strokeWidth="1.500" />
            <path d="M8.500 5H16v3c0 3-7.500 3-7.500 0z" fill="#fff" />
          </Icon>
          <Icon>
            <path d="M2 14v-2M5 14v-4M8 14V8M11 14V5M14 14V2" stroke="#fff" strokeWidth="2" />
          </Icon>
          <Icon>
            <path d="M1 5.500h3L8 2v12l-4-3.500H1z" fill="#fff" />
            <path d="M10 5.500c1.500 1.500 1.500 3.500 0 5M12 3.500c2.500 2.500 2.500 6.500 0 9" stroke="#fff" />
          </Icon>
        </div>
        <div className="w-[79px] pl-1 text-center text-[11px] leading-[17px]">
          <div>5:16 PM</div>
          <div>8/15/2021</div>
        </div>
        <button aria-label="Show desktop" className="h-[39px] w-[14px] border border-[#55606c] bg-linear-to-b from-[#aab2bb88] to-[#20304a]" />
      </div>
    </div>
  );
}

export default function App() {
  return (
    <div className="flex h-screen flex-col overflow-hidden bg-[#f0f0f0] font-['Noto_Sans',sans-serif] text-[11px] leading-4 text-black">
      <TitleBar />
      <div className="flex min-h-0 flex-1">
        <div className="w-2 shrink-0 border-l border-r border-l-[#2a3138] border-r-[#8a8f94] bg-[linear-gradient(#b9cfe2_0%,#e8eef4_4%,#dfe6ee_30%,#9aa5ae_38%,#c9d3db_42%,#e0e6ec_60%,#9aa4ac_75%,#8c979f_88%,#dde3e8_100%)]" />
        <div className="flex min-w-0 flex-1 flex-col">
          <MenuBar />
          <StandardToolbar />
          <LineToolbar />
          <main className="flex min-h-0 flex-1">
            <div className="flex w-[332px] shrink-0 flex-col border-t border-[#a0a0a0] pb-[5px]">
              <MarketWatch />
              <Navigator />
            </div>
            <ChartWindow />
          </main>
          <DockRow>
            <p className="whitespace-pre">Balance: 3,114.80 USD  Profit/Loss: -52.18  Equity: 3,062.62  Margin: 11.81  Free margin: 3,050.81  Margin level: 25932.43%</p>
          </DockRow>
          <DockRow>
            <p>Strategy Tester</p>
          </DockRow>
          <StatusBar />
        </div>
      </div>
      <Taskbar />
    </div>
  );
}
